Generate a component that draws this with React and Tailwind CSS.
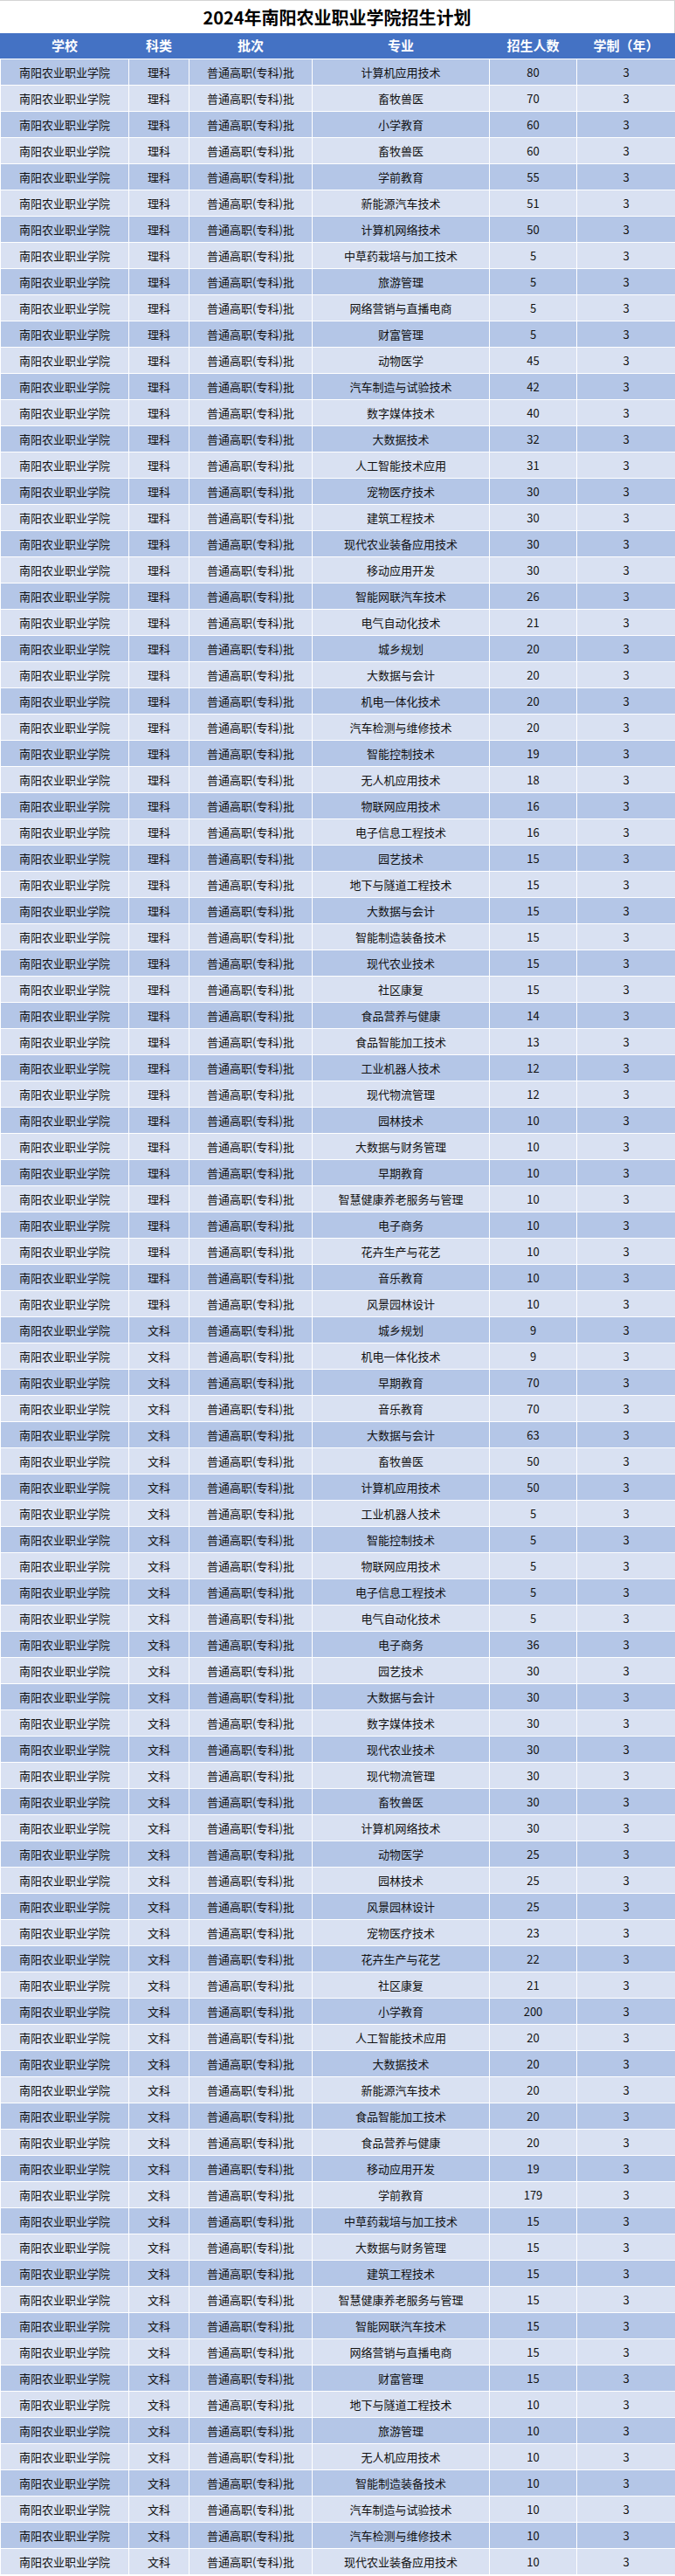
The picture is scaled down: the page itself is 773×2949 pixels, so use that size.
const school = '南阳农业职业学院';
const batch = '普通高职(专科)批';

const li = [
  ['计算机应用技术', 80], ['畜牧兽医', 70], ['小学教育', 60], ['畜牧兽医', 60], ['学前教育', 55],
  ['新能源汽车技术', 51], ['计算机网络技术', 50], ['中草药栽培与加工技术', 5], ['旅游管理', 5],
  ['网络营销与直播电商', 5], ['财富管理', 5], ['动物医学', 45], ['汽车制造与试验技术', 42],
  ['数字媒体技术', 40], ['大数据技术', 32], ['人工智能技术应用', 31], ['宠物医疗技术', 30],
  ['建筑工程技术', 30], ['现代农业装备应用技术', 30], ['移动应用开发', 30], ['智能网联汽车技术', 26],
  ['电气自动化技术', 21], ['城乡规划', 20], ['大数据与会计', 20], ['机电一体化技术', 20],
  ['汽车检测与维修技术', 20], ['智能控制技术', 19], ['无人机应用技术', 18], ['物联网应用技术', 16],
  ['电子信息工程技术', 16], ['园艺技术', 15], ['地下与隧道工程技术', 15], ['大数据与会计', 15],
  ['智能制造装备技术', 15], ['现代农业技术', 15], ['社区康复', 15], ['食品营养与健康', 14],
  ['食品智能加工技术', 13], ['工业机器人技术', 12], ['现代物流管理', 12], ['园林技术', 10],
  ['大数据与财务管理', 10], ['早期教育', 10], ['智慧健康养老服务与管理', 10], ['电子商务', 10],
  ['花卉生产与花艺', 10], ['音乐教育', 10], ['风景园林设计', 10],
];

const wen = [
  ['城乡规划', 9], ['机电一体化技术', 9], ['早期教育', 70], ['音乐教育', 70], ['大数据与会计', 63],
  ['畜牧兽医', 50], ['计算机应用技术', 50], ['工业机器人技术', 5], ['智能控制技术', 5],
  ['物联网应用技术', 5], ['电子信息工程技术', 5], ['电气自动化技术', 5], ['电子商务', 36],
  ['园艺技术', 30], ['大数据与会计', 30], ['数字媒体技术', 30], ['现代农业技术', 30],
  ['现代物流管理', 30], ['畜牧兽医', 30], ['计算机网络技术', 30], ['动物医学', 25], ['园林技术', 25],
  ['风景园林设计', 25], ['宠物医疗技术', 23], ['花卉生产与花艺', 22], ['社区康复', 21],
  ['小学教育', 200], ['人工智能技术应用', 20], ['大数据技术', 20], ['新能源汽车技术', 20],
  ['食品智能加工技术', 20], ['食品营养与健康', 20], ['移动应用开发', 19], ['学前教育', 179],
  ['中草药栽培与加工技术', 15], ['大数据与财务管理', 15], ['建筑工程技术', 15],
  ['智慧健康养老服务与管理', 15], ['智能网联汽车技术', 15], ['网络营销与直播电商', 15], ['财富管理', 15],
  ['地下与隧道工程技术', 10], ['旅游管理', 10], ['无人机应用技术', 10], ['智能制造装备技术', 10],
  ['汽车制造与试验技术', 10], ['汽车检测与维修技术', 10], ['现代农业装备应用技术', 10],
];

const rows = [
  ...li.map(([major, count]) => ({ type: '理科', major, count })),
  ...wen.map(([major, count]) => ({ type: '文科', major, count })),
];

const cols = 'grid grid-cols-[146px_68px_140px_202px_99px_112px] gap-x-px pl-px';

function Cell({ children }) {
  return <div className="flex items-center justify-center whitespace-nowrap">{children}</div>;
}

export default function App() {
  return (
    <div className="w-[773px] bg-white font-['Noto_Sans_CJK_SC','Noto_Sans',sans-serif]">
      <div className="flex h-[38px] items-center justify-center border-t border-r border-[#d4d4d4] text-[20px] font-bold leading-none text-black">
        2024年南阳农业职业学院招生计划
      </div>
      <div className={`${cols} h-[29px] bg-[#4472c4] text-[15px] font-bold text-white`}>
        <Cell>学校</Cell>
        <Cell>科类</Cell>
        <Cell>批次</Cell>
        <Cell>专业</Cell>
        <Cell>招生人数</Cell>
        <Cell>学制（年）</Cell>
      </div>
      <div className="flex flex-col gap-y-px pt-px pb-px">
        {rows.map((r, i) => (
          <div key={i} className={`${cols} h-[29px] text-[13px] text-[#111]`}>
            <div className={`flex items-center justify-center ${i % 2 === 0 ? 'bg-[#b4c6e7]' : 'bg-[#d9e1f2]'}`}>{school}</div>
            <div className={`flex items-center justify-center ${i % 2 === 0 ? 'bg-[#b4c6e7]' : 'bg-[#d9e1f2]'}`}>{r.type}</div>
            <div className={`flex items-center justify-center ${i % 2 === 0 ? 'bg-[#b4c6e7]' : 'bg-[#d9e1f2]'}`}>{batch}</div>
            <div className={`flex items-center justify-center whitespace-nowrap ${i % 2 === 0 ? 'bg-[#b4c6e7]' : 'bg-[#d9e1f2]'}`}>{r.major}</div>
            <div className={`flex items-center justify-center ${i % 2 === 0 ? 'bg-[#b4c6e7]' : 'bg-[#d9e1f2]'}`}>{r.count}</div>
            <div className={`flex items-center justify-center ${i % 2 === 0 ? 'bg-[#b4c6e7]' : 'bg-[#d9e1f2]'}`}>3</div>
          </div>
        ))}
      </div>
    </div>
  );
}
